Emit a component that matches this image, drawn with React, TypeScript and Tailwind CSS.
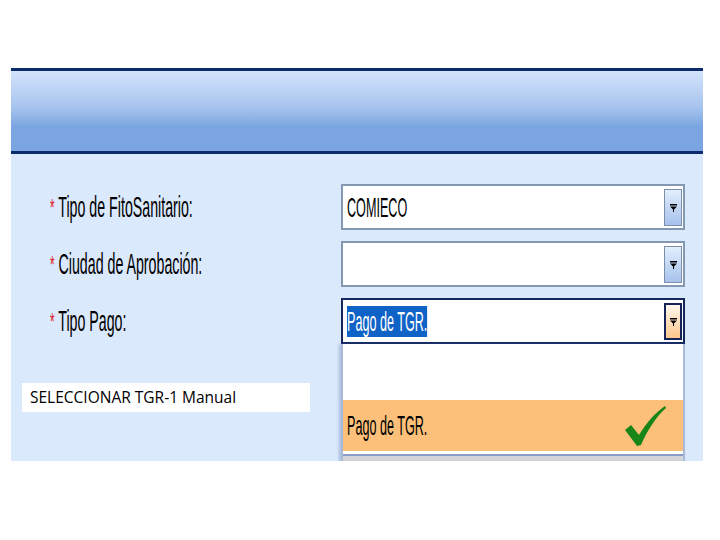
const Arrow = ({ active }: { active?: boolean }) => (
  <div
    className={
      active
        ? "w-[18px] h-[37px] border-2 border-[#14245a] bg-linear-to-b from-[#fff8ee] to-[#fbc68a] flex justify-center pt-[13px]"
        : "w-[18px] h-[37px] border border-[#7d8fa8] bg-linear-to-b from-[#e3eefd] to-[#a6c2ec] flex justify-center pt-[14px]"
    }
  >
    <svg width="7" height="8" viewBox="0 0 7 8">
      <rect x="0" y="0" width="7" height="1.5" fill="#000" />
      <path d="M0 2.5 L7 2.5 L3.5 6 Z" fill="#000" />
      <rect x="3" y="5" width="1" height="3" fill="#000" />
    </svg>
  </div>
);

const Narrow = ({ text, className }: { text: string; className?: string }) => (
  <span
    className={
      "inline-block origin-left scale-x-[0.45] whitespace-nowrap text-[28px] leading-[31px] font-['Liberation_Sans',Arial,sans-serif] " +
      (className ?? "")
    }
  >
    {text}
  </span>
);

const Label = ({ text }: { text: string }) => (
  <div className="w-[330px] pl-[39px] flex items-center">
    <span className="inline-block origin-left scale-x-[0.49] whitespace-nowrap text-[29px] leading-[31px] text-black font-['Liberation_Sans',Arial,sans-serif]">
      <span className="text-[#e0242a] text-[24px] align-top">*</span> {text}
    </span>
  </div>
);

const Select = ({
  value,
  active,
}: {
  value?: string;
  active?: boolean;
}) => (
  <div
    className={
      "w-[344px] h-[46px] bg-white flex items-center justify-between pl-[4px] pr-[1px] border-2 " +
      (active ? "border-[#14285e]" : "border-[#8598b2]")
    }
  >
    <div className="w-[300px] overflow-hidden">
      {value ? (
        <Narrow
          text={value}
          className={active ? "bg-[#0f62c6] text-white" : "text-black"}
        />
      ) : null}
    </div>
    <Arrow active={active} />
  </div>
);

export default function App() {
  return (
    <div className="w-[720px] h-[540px] bg-white pt-[68px] pl-[11px]">
      <div className="w-[692px]">
        <div className="h-[86px] border-t-[3px] border-b-[3px] border-[#0d2c6c] bg-linear-to-b from-[#d3e3fb] via-[#a7c4ee] via-45% to-[#7aa5e0] to-70%" />
        <div className="h-[307px] bg-[#dbe9fc] pt-[30px] overflow-hidden">
          <div className="flex mb-[11px]">
            <Label text="Tipo de FitoSanitario:" />
            <Select value="COMIECO" />
          </div>
          <div className="flex mb-[11px]">
            <Label text="Ciudad de Aprobación:" />
            <Select />
          </div>
          <div className="flex">
            <Label text="Tipo Pago:" />
            <Select value="Pago de TGR." active />
          </div>
          <div className="flex">
            <div className="w-[330px] pl-[11px] pt-[39px]">
              <div className="w-[288px] h-[29px] bg-white pl-[8px] flex items-center text-[15.5px] text-black font-['Open_Sans',Arial,sans-serif]">
                SELECCIONAR TGR-1 Manual
              </div>
            </div>
            <div className="w-[344px] border-x-2 border-[#a9b9d6] bg-white shadow-[-2px_0_3px_rgba(80,110,170,0.35)]">
              <div className="h-[56px] bg-white" />
              <div className="h-[51px] bg-[#fcc07a] flex items-center justify-between pl-[4px] pr-[16px]">
                <Narrow text="Pago de TGR." className="text-black" />
                <svg width="44" height="44" viewBox="0 0 44 44">
                  <path
                    d="M2 26 L8 21 L16 31 C24 18 32 9 42 2 L43 4 C33 13 25 25 18 41 L14 42 Z"
                    fill="#178517"
                  />
                </svg>
              </div>
              <div className="h-[3px] bg-white" />
              <div className="h-[2px] bg-[#8a9cc6]" />
              <div className="h-[20px] bg-[#d2d4d8]" />
            </div>
          </div>
        </div>
      </div>
    </div>
  );
}
